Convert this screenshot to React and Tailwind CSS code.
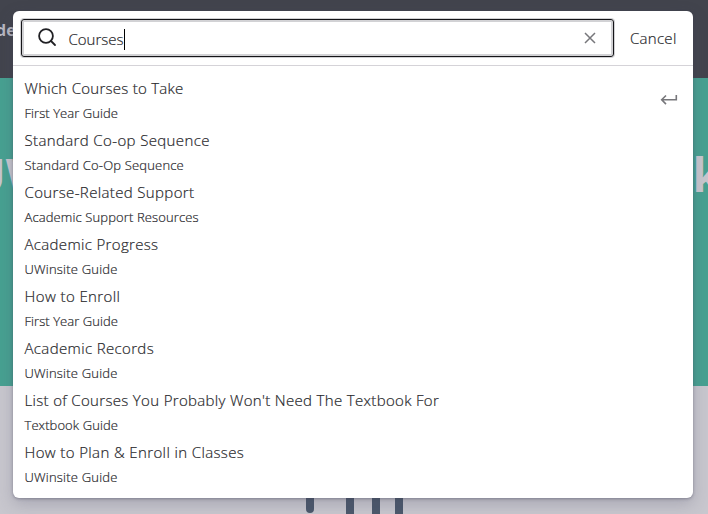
const results = [
  ["Which Courses to Take", "First Year Guide", "tracking-[0.27px]", "tracking-[0.06px]"],
  ["Standard Co-op Sequence", "Standard Co-Op Sequence", "tracking-[0.37px]", "tracking-[0.17px]"],
  ["Course-Related Support", "Academic Support Resources", "tracking-[0.36px]", "tracking-[0.12px]"],
  ["Academic Progress", "UWinsite Guide", "tracking-[0.34px]", "tracking-[0.2px]"],
  ["How to Enroll", "First Year Guide", "tracking-[0.41px]", "tracking-[0.06px]"],
  ["Academic Records", "UWinsite Guide", "tracking-[0.36px]", "tracking-[0.2px]"],
  ["List of Courses You Probably Won't Need The Textbook For", "Textbook Guide", "tracking-[0.33px]", "tracking-[0.08px]"],
  ["How to Plan & Enroll in Classes", "UWinsite Guide", "tracking-[0.38px]", "tracking-[0.2px]"],
];

function Backdrop() {
  return (
    <div className="flex h-full flex-col">
      <div className="flex h-[78px] items-start bg-[#42444d]">
        <span className="-ml-[4px] mt-[19px] text-[16px] leading-[22px] font-bold text-[#b9b9c2]">de</span>
      </div>
      <div className="flex h-[308px] items-start justify-between overflow-hidden bg-[#47a191] pt-[69px] text-[46px] leading-[54px] font-bold text-[#c8c7ce]">
        <span className="-ml-[29px]">UW</span>
        <span className="-mr-[13px]">k</span>
      </div>
      <div className="flex flex-1 items-end bg-[#c8c7ce]">
        <svg className="ml-[306px]" width="98" height="18" fill="#4b586b">
          <path d="M0 0h8v13a4 4 0 0 1-8 0zM40 0h8v18h-8zM66 0h8v18h-8zM89 0h8v18h-8z" />
        </svg>
      </div>
    </div>
  );
}

export default function App() {
  return (
    <div className="relative h-[514px] w-[708px] overflow-hidden font-['Open_Sans','Noto_Sans',sans-serif]">
      <Backdrop />
      <div className="absolute top-[11px] left-[13px] flex h-[487px] w-[680px] flex-col rounded-md bg-white font-light text-[#28282c] shadow-[0_1px_3px_rgba(60,60,80,0.4),0_6px_16px_rgba(70,70,100,0.25)] [-webkit-text-stroke:0.2px_#28282c]">
        <div className="flex h-[55px] shrink-0 items-center border-b border-[#d5d3d8] pl-2">
          <div className="flex h-[38px] w-[593px] items-center rounded-[3px] border border-[#151519] px-4 shadow-[0_0_0_1px_#d2d2d5,inset_0_0_0_2px_#d2d2d5]">
            <svg width="19" height="20" viewBox="0 0 19 20" fill="none" stroke="#202024" strokeWidth="1.8">
              <circle cx="8" cy="8" r="6.9" />
              <path d="m13 13 4 4" strokeLinecap="round" />
            </svg>
            <span className="ml-[11.5px] pt-[2px] text-[15px] leading-5">Courses</span>
            <span className="mt-0.5 h-[21px] w-px bg-black" />
            <svg className="ml-auto mr-[1px]" width="12" height="12" viewBox="0 0 12 12" fill="none" stroke="#77777b" strokeWidth="1.5">
              <path d="m1 1 10 10M11 1 1 11" />
            </svg>
          </div>
          <span className="ml-4 text-[15px] leading-5 tracking-[0.28px]">Cancel</span>
        </div>
        <div className="flex justify-between pt-[9px] pr-[15px] pl-[11.5px]">
          <ul>
            {results.map(([title, section, titleSpacing, sectionSpacing]) => (
              <li key={title} className="h-[52px] whitespace-nowrap">
                <div className={`h-[27px] text-[15px] leading-[27px] ${titleSpacing}`}>{title}</div>
                <div className={`h-[25px] text-[13px] leading-[22px] ${sectionSpacing}`}>{section}</div>
              </li>
            ))}
          </ul>
          <svg className="mt-[19px]" width="18" height="12" viewBox="0 0 18 12" fill="none" stroke="#77777b" strokeWidth="1.6">
            <path d="M16.3 1v4.8H2M6 1.5 1.7 5.8 6 10.1" />
          </svg>
        </div>
      </div>
    </div>
  );
}
